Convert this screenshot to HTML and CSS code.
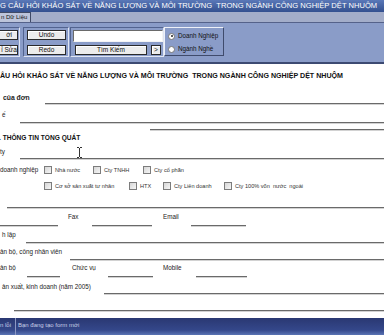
FILE: index.html
```html
<!DOCTYPE html>
<html>
<head>
<meta charset="utf-8">
<link rel="stylesheet" href="styles.css">
</head>
<body>
<div class="app">
  <div class="titlebar">G CÂU HỎI KHẢO SÁT VỀ NĂNG LƯỢNG VÀ MÔI TRƯỜNG&nbsp; TRONG NGÀNH CÔNG NGHIỆP DỆT NHUỘM</div>
  <div class="tabs"><div class="tab">n Dữ Liệu</div></div>
  <div class="toolbar">
    <div class="grp g1">
      <div class="btn b1">ới</div>
      <div class="btn b1">ỉ Sửa</div>
    </div>
    <div class="grp g2">
      <div class="btn b2">Undo</div>
      <div class="btn b2">Redo</div>
    </div>
    <div class="grp g3">
      <div class="search"></div>
      <div class="srow">
        <div class="btn b3">Tìm Kiếm</div>
        <div class="btn b4">&gt;</div>
      </div>
    </div>
    <div class="grp g4">
      <div class="radio"><span class="dot on"></span>Doanh Nghiệp</div>
      <div class="radio"><span class="dot"></span>Ngành Nghề</div>
    </div>
  </div>
  <div class="content">
    <div class="heading">ÂU HỎI KHẢO SÁT VỀ NĂNG LƯỢNG VÀ MÔI TRƯỜNG&nbsp; TRONG NGÀNH CÔNG NGHIỆP DỆT NHUỘM</div>

    <div class="row ra">
      <div class="lbl bold wa">của đơn</div>
      <div class="ln"></div>
    </div>
    <div class="row rb">
      <div class="lbl wb">ế</div>
      <div class="ln"></div>
    </div>
    <div class="row rc">
      <div class="ln"></div>
    </div>
    <div class="section">. THÔNG TIN TỔNG QUÁT</div>
    <div class="row re">
      <div class="lbl wb">ty</div>
      <div class="ln"></div>
    </div>
    <div class="row cb1">
      <div class="lbl wc">doanh nghiệp</div>
      <div class="chk w49"><span class="box"></span>Nhà nước</div>
      <div class="chk w50"><span class="box"></span>Cty TNHH</div>
      <div class="chk"><span class="box"></span>Cty cổ phần</div>
    </div>
    <div class="row cb2">
      <div class="lbl wc"></div>
      <div class="chk w85"><span class="box"></span>Cơ sở sản xuất tư nhân</div>
      <div class="chk w34"><span class="box"></span>HTX</div>
      <div class="chk w61"><span class="box"></span>Cty Liên doanh</div>
      <div class="chk"><span class="box"></span>Cty 100% vốn&nbsp; nước&nbsp; ngoài</div>
    </div>
    <div class="row rh">
      <div class="ln"></div>
    </div>
    <div class="row ri">
      <div class="ln fixed w58"></div>
      <div class="lbl ml10 w24">Fax</div>
      <div class="ln fixed w60"></div>
      <div class="lbl ml11 w28">Email</div>
      <div class="ln fixed w55"></div>
    </div>
    <div class="row rj">
      <div class="lbl w26">h lập</div>
      <div class="ln"></div>
    </div>
    <div class="row rk">
      <div class="lbl w70">ản bộ, công nhân viên</div>
      <div class="ln"></div>
    </div>
    <div class="row rl">
      <div class="lbl w27">ản bộ</div>
      <div class="ln fixed w33"></div>
      <div class="lbl ml12 w36">Chức vụ</div>
      <div class="ln fixed w45"></div>
      <div class="lbl ml10 w33">Mobile</div>
      <div class="ln fixed w51"></div>
    </div>
    <div class="row rm">
      <div class="lbl w104">ản xuất, kinh doanh (năm 2005)</div>
      <div class="ln"></div>
    </div>
    <div class="row rn">
      <div class="ln"></div>
    </div>
    <svg class="ibeam" width="7" height="11" viewBox="0 0 7 11">
      <path d="M1 0.5h2M4 0.5h2M3.5 1v9M1 10.5h2M4 10.5h2" stroke="#333" stroke-width="1" fill="none"/>
    </svg>
  </div>
  <div class="status">
    <div class="cell c1">n lỗi</div>
    <div class="cell c2">Bạn đang tạo form mới</div>
  </div>
</div>
</body>
</html>
```
FILE: styles.css
```css
* { box-sizing: border-box; }
html, body { margin: 0; padding: 0; }
body { width: 384px; height: 335px; overflow: hidden; background: #fff; }
.app {
  width: 384px; height: 335px; overflow: hidden;
  display: flex; flex-direction: column;
  font-family: "Liberation Sans", Arial, sans-serif;
  color: #111;
}
.titlebar {
  height: 12px; flex: none;
  background: linear-gradient(#5a78b8, #33508f);
  color: #fff; font-size: 7.6px; line-height: 12px;
  white-space: nowrap; overflow: hidden;
}
.tabs {
  height: 11px; flex: none;
  background: #a3adc9;
  border-bottom: 1px solid #55628a;
  display: flex; align-items: flex-end;
}
.tab {
  width: 31px; height: 10px;
  border: 1px solid #3f4a66; border-left: none; border-bottom: none;
  background: #bcc4da;
  font-size: 6px; line-height: 9px; padding-left: 1px; white-space: nowrap;
}
.toolbar {
  height: 41px; flex: none;
  background: #8a9cc8;
  border-bottom: 2px solid #3c4a72;
  display: flex; align-items: flex-start;
  padding-top: 4px;
}
.grp {
  height: 30px;
  border: 1px solid; border-color: #52638f #dfe5f3 #dfe5f3 #52638f;
  display: flex; flex-direction: column; gap: 5px;
  padding-top: 2px;
}
.g1 { width: 30px; margin-left: -10px; padding-left: 1px; }
.g2 { width: 46px; margin-left: 3px; padding-left: 3px; }
.g3 { width: 94px; margin-left: 1px; padding-left: 2px; gap: 2px; padding-top: 2px; }
.g4 {
  width: 60px; height: 29px;
  border-color: #eef1f8 #3f4b6c #3f4b6c #eef1f8;
  padding-top: 4px; padding-left: 3px; gap: 5px;
}
.btn {
  height: 10px;
  background: #ececec;
  border: 1px solid #2a2a2a;
  box-shadow: inset 1px 1px 0 #fff;
  font-size: 6.5px; line-height: 8px; text-align: center; white-space: nowrap;
  color: #111;
}
.b1 { width: 26px; padding-left: 8px; text-align: center; }
.b2 { width: 39px; }
.search {
  width: 90px; height: 12px;
  background: #fff;
  border: 1px solid; border-color: #6a6a6a #f4f4f4 #f4f4f4 #6a6a6a;
}
.srow { display: flex; gap: 4px; padding-left: 2px; margin-top: 1px; }
.b3 { width: 72px; }
.b4 { width: 10px; }
.radio {
  display: flex; align-items: center; gap: 3px;
  font-size: 6.3px; line-height: 8px; white-space: nowrap; color: #111;
}
.dot {
  width: 7px; height: 7px; border-radius: 50%;
  background: #fff; border: 1px solid #777;
  position: relative; flex: none;
}
.dot.on::after {
  content: ""; position: absolute; left: 1.5px; top: 1.5px;
  width: 2px; height: 2px; border-radius: 50%; background: #222;
}
.content {
  flex: 1; position: relative;
  background: #fff;
  display: flex; flex-direction: column;
  font-size: 6.3px;
}
.heading {
  height: 24px; line-height: 24px; flex: none;
  font-weight: bold; font-size: 7.1px; white-space: nowrap; overflow: hidden;
}
.row { display: flex; align-items: flex-start; flex: none; white-space: nowrap; }
.lbl { flex: none; line-height: 10px; white-space: nowrap; color: #222; }
.bold { font-weight: bold; font-size: 6.8px; }
.ln {
  flex: 1; height: 2px;
  border-top: 1px solid #6a6a6a; border-bottom: 1px solid #d2d2d2;
}
.ln.fixed { flex: none; }

.ra { height: 22px; }
.ra .lbl { line-height: 20px; padding-left: 3px; }
.ra .ln { margin-top: 15px; }
.wa { width: 45px; }
.rb { height: 16px; }
.rb .lbl { padding-left: 2px; }
.rb .ln { margin-top: 12px; }
.wb { width: 20px; }
.rc { height: 6px; padding-left: 150px; }
.rc .ln { margin-top: 3px; }
.section {
  height: 13px; line-height: 12px; flex: none;
  font-weight: bold; font-size: 6.6px; margin-left: -1px; white-space: nowrap;
}
.re { height: 17px; }
.re .lbl { line-height: 14px; }
.re .ln { margin-top: 13px; }
.cb1 { height: 15px; align-items: center; }
.cb2 { height: 17px; align-items: center; }
.wc { width: 44px; }
.chk { display: flex; align-items: center; gap: 3px; flex: none; font-size: 5.6px; color: #333; }
.box {
  width: 8px; height: 8px; flex: none;
  border: 1px solid #7c7c7c;
  background: linear-gradient(135deg, #d6d6d6, #f6f6f6);
}
.w49 { width: 49px; } .w50 { width: 50px; } .w85 { width: 85px; }
.w34 { width: 34px; } .w61 { width: 61px; }
.rh { height: 18px; padding-left: 7px; }
.rh .ln { margin-top: 13px; }
.ri { height: 18px; }
.ri .ln { margin-top: 13px; }
.ml10 { margin-left: 10px; } .ml11 { margin-left: 11px; } .ml12 { margin-left: 12px; }
.w24 { width: 24px; } .w26 { width: 26px; } .w27 { width: 27px; } .w28 { width: 28px; }
.w33 { width: 33px; } .w36 { width: 36px; } .w45 { width: 45px; } .w51 { width: 51px; }
.w55 { width: 55px; } .w58 { width: 58px; } .w60 { width: 60px; } .w70 { width: 70px; }
.w104 { width: 104px; }
.rj { height: 17px; }
.rj .lbl { padding-left: 2px; }
.rj .ln { margin-top: 12px; }
.rk { height: 16px; }
.rk .ln { margin-top: 12px; }
.rl { height: 18px; }
.rl .ln { margin-top: 13px; }
.rm { height: 19px; }
.rm .lbl { line-height: 12px; padding-left: 2px; }
.rm .ln { margin-top: 12px; }
.rn { height: 18px; padding-left: 14px; }
.rn .ln { margin-top: 10px; }
.ibeam { position: absolute; left: 76px; top: 83px; }
.status {
  height: 17px; flex: none;
  background: linear-gradient(#2a3872 0%, #34478a 70%, #5a74b4 100%);
  display: flex; align-items: stretch;
  font-size: 6px; color: #c9cfe6;
}
.cell { line-height: 13px; white-space: nowrap; padding-top: 1px; }
.c1 { width: 16px; border-right: 1px solid #8c98c4; margin-right: 2px; overflow: hidden; }
.c2 { padding-left: 0; }
```
